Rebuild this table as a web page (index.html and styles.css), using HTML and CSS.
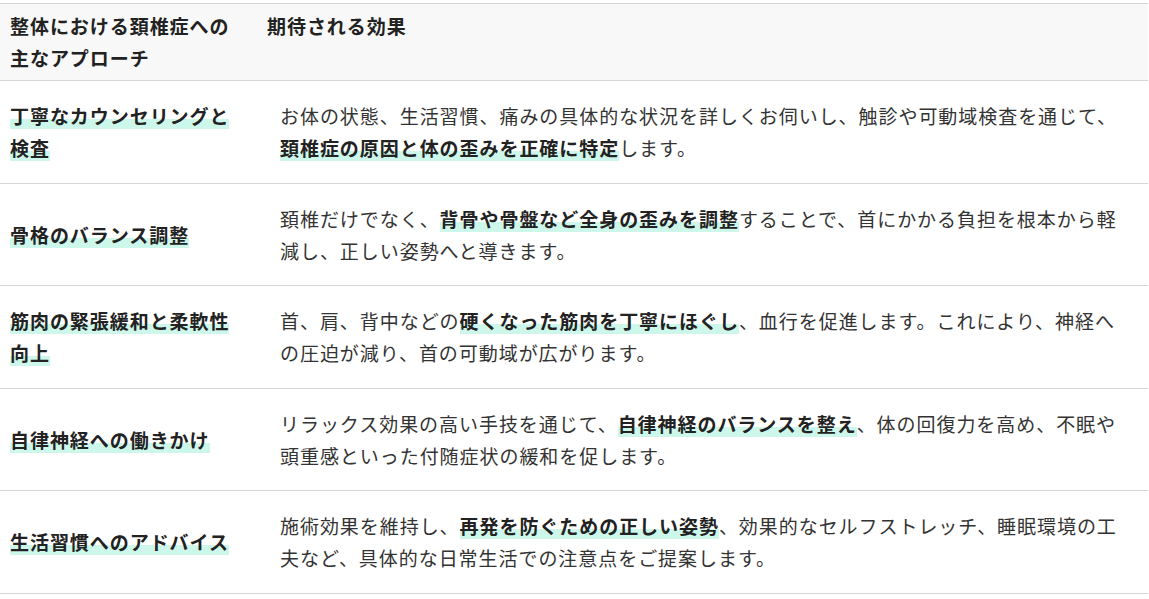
FILE: index.html
```html
<!DOCTYPE html>
<html lang="ja">
<head>
<meta charset="utf-8">
<link rel="stylesheet" href="styles.css">
</head>
<body>
<div class="wrap">
<table class="tbl">
  <colgroup><col class="c1"><col class="c2"></colgroup>
  <thead>
    <tr><th>整体における頚椎症への主なアプローチ</th><th>期待される効果</th></tr>
  </thead>
  <tbody>
    <tr>
      <td><strong class="mk">丁寧なカウンセリングと検査</strong></td>
      <td>お体の状態、生活習慣、痛みの具体的な状況を詳しくお伺いし、触診や可動域検査を通じて、<strong class="mk">頚椎症の原因と体の歪みを正確に特定</strong>します。</td>
    </tr>
    <tr>
      <td><strong class="mk">骨格のバランス調整</strong></td>
      <td>頚椎だけでなく、<strong class="mk">背骨や骨盤など全身の歪みを調整</strong>することで、首にかかる負担を根本から軽減し、正しい姿勢へと導きます。</td>
    </tr>
    <tr>
      <td><strong class="mk">筋肉の緊張緩和と柔軟性向上</strong></td>
      <td>首、肩、背中などの<strong class="mk">硬くなった筋肉を丁寧にほぐし</strong>、血行を促進します。これにより、神経への圧迫が減り、首の可動域が広がります。</td>
    </tr>
    <tr>
      <td><strong class="mk">自律神経への働きかけ</strong></td>
      <td>リラックス効果の高い手技を通じて、<strong class="mk">自律神経のバランスを整え</strong>、体の回復力を高め、不眠や頭重感といった付随症状の緩和を促します。</td>
    </tr>
    <tr>
      <td><strong class="mk">生活習慣へのアドバイス</strong></td>
      <td>施術効果を維持し、<strong class="mk">再発を防ぐための正しい姿勢</strong>、効果的なセルフストレッチ、睡眠環境の工夫など、具体的な日常生活での注意点をご提案します。</td>
    </tr>
  </tbody>
</table>
</div>
</body>
</html>
```

FILE: styles.css
```css
html, body {
  margin: 0;
  padding: 0;
  background: #ffffff;
}
body {
  font-family: "Noto Sans CJK JP", "Noto Sans", sans-serif;
  color: #333333;
}
.wrap {
  padding-top: 3px;
  width: 1148px;
}
.tbl {
  width: 100%;
  border-collapse: collapse;
  table-layout: fixed;
  font-size: 19px;
  letter-spacing: 0.05em;
  line-height: 32px;
}
.c1 { width: 257px; }
.tbl th {
  background: #f8f8f8;
  color: #222222;
  font-weight: 700;
  text-align: left;
  padding: 6px 10px;
  border-top: 1px solid #d6d6d6;
  border-bottom: 1px solid #d6d6d6;
  vertical-align: top;
}
.tbl td {
  padding: 19px 10px 18.5px;
  border-bottom: 1px solid #d6d6d6;
  vertical-align: middle;
}
.tbl td + td {
  padding-left: 23px;
  padding-right: 23px;
}
.mk {
  font-weight: 700;
  color: #222222;
  background: linear-gradient(transparent 64%, #cdf7ea 64%);
}
```
